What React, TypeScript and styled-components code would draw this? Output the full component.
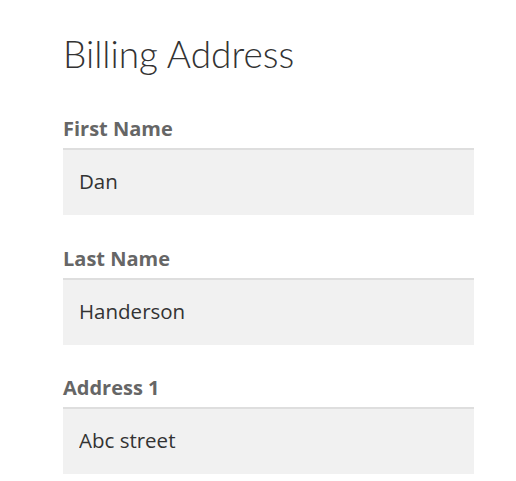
import React from 'react'
import styled, { createGlobalStyle } from 'styled-components'

const GlobalStyle = createGlobalStyle`
  html, body {
    margin: 0;
    padding: 0;
    background: #fff;
  }
  body {
    font-family: 'Open Sans', Lato, sans-serif;
  }
`

const Form = styled.form`
  width: 411px;
  padding: 30px 0 0 63px;
`

const Title = styled.h1`
  margin: 0 0 37px;
  font-family: Lato, 'Open Sans', sans-serif;
  font-size: 37px;
  line-height: 48px;
  font-weight: 300;
  color: #333;
`

const Field = styled.div`
  display: flex;
  flex-direction: column;
  margin-bottom: 29.5px;
`

const Label = styled.label`
  margin-bottom: 5px;
  font-size: 20px;
  line-height: 28px;
  font-weight: 700;
  color: #666;
`

const Input = styled.input`
  box-sizing: border-box;
  width: 100%;
  height: 67px;
  padding: 0 16px 3px;
  border: 0;
  border-top: 2px solid #dedede;
  background: #f1f1f1;
  font-family: inherit;
  font-size: 20.5px;
  color: #333;
  outline: none;
`

const fields = [
  { id: 'first-name', label: 'First Name', value: 'Dan' },
  { id: 'last-name', label: 'Last Name', value: 'Handerson' },
  { id: 'address-1', label: 'Address 1', value: 'Abc street' },
]

export default function App () {
  return (
    <>
      <GlobalStyle />
      <Form onSubmit={(e) => e.preventDefault()}>
        <Title>Billing Address</Title>
        {fields.map((f) => (
          <Field key={f.id}>
            <Label htmlFor={f.id}>{f.label}</Label>
            <Input id={f.id} defaultValue={f.value} />
          </Field>
        ))}
      </Form>
    </>
  )
}
